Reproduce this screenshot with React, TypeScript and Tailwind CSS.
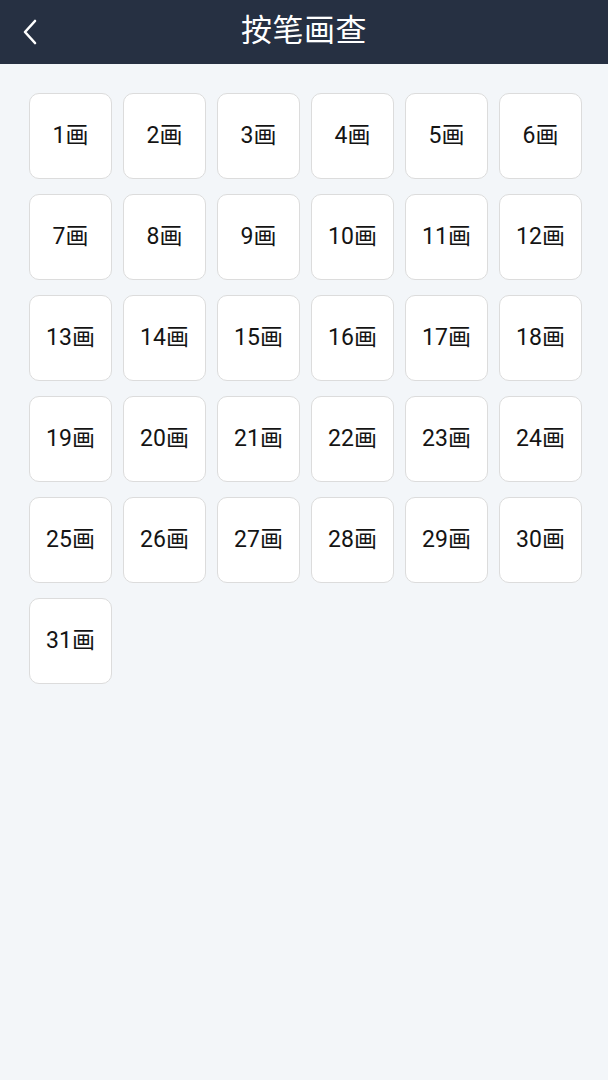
import React from "react";

export default function App() {
  const items = Array.from({ length: 31 }, (_, i) => i + 1);
  return (
    <div
      className="min-h-[1080px] w-full bg-[#f3f6f9]"
      style={{ fontFamily: '"Roboto", "Noto Sans CJK SC", sans-serif' }}
    >
      <div className="relative flex h-16 items-center justify-center bg-[#263042]">
        <button className="absolute left-[18px] top-[16px] flex h-8 w-6 items-center justify-center">
          <svg width="20" height="30" viewBox="0 0 20 30" fill="none">
            <path d="M15 4 L5 15 L15 26" stroke="#ffffff" strokeWidth="2.6" strokeLinecap="round" strokeLinejoin="round" />
          </svg>
        </button>
        <h1 className="text-[31px] leading-none text-white tracking-[0.5px] -mt-[3px]">按笔画查</h1>
      </div>
      <div className="grid grid-cols-[repeat(6,83px)] gap-x-[11px] gap-y-[15px] pl-[29px] pt-[29px]">
        {items.map((n) => (
          <div
            key={n}
            className="flex h-[86px] items-center justify-center rounded-[10px] border-[1.5px] border-[#dcdcdc] bg-white text-[23px] text-[#141414]"
          >
            {n}画
          </div>
        ))}
      </div>
    </div>
  );
}
